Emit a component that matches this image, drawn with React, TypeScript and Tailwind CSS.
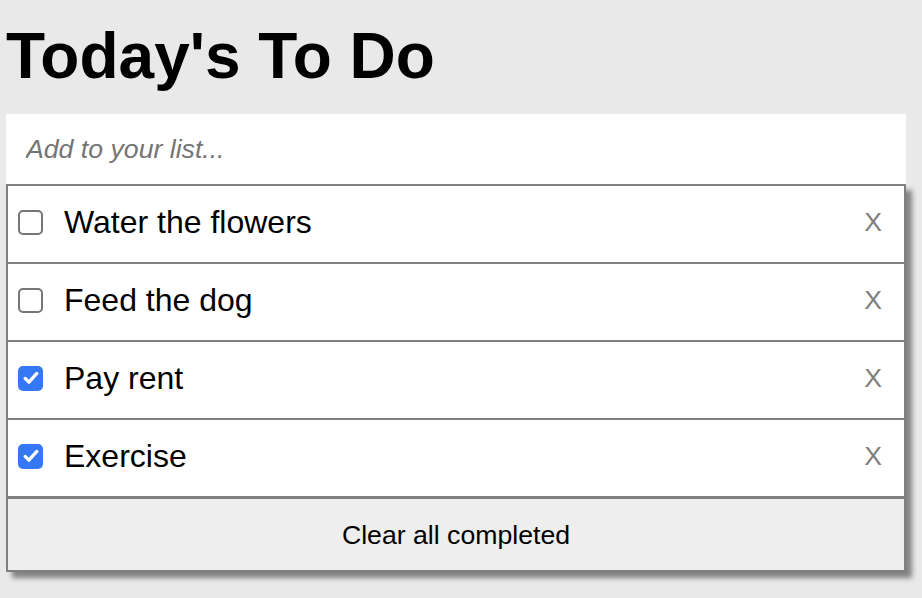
import { useState } from "react";

type Todo = { id: number; text: string; done: boolean };

const initial: Todo[] = [
  { id: 1, text: "Water the flowers", done: false },
  { id: 2, text: "Feed the dog", done: false },
  { id: 3, text: "Pay rent", done: true },
  { id: 4, text: "Exercise", done: true },
];

function Check({ checked, onClick }: { checked: boolean; onClick: () => void }) {
  return (
    <button
      onClick={onClick}
      className={
        checked
          ? "w-[25px] h-[25px] shrink-0 rounded-[5px] bg-[#3478f6] flex items-center justify-center"
          : "w-[25px] h-[25px] shrink-0 rounded-[5px] bg-white border-2 border-[#767676]"
      }
    >
      {checked && (
        <svg viewBox="0 0 24 24" className="w-[20px] h-[20px]">
          <path
            d="M5 12.5l4.5 4.5L19 6.5"
            fill="none"
            stroke="white"
            strokeWidth="4"
            strokeLinecap="round"
            strokeLinejoin="round"
          />
        </svg>
      )}
    </button>
  );
}

export default function App() {
  const [todos, setTodos] = useState<Todo[]>(initial);

  return (
    <div className="min-h-screen bg-[#e9e9e9] px-[6px] font-['Liberation_Sans',Arial,sans-serif] text-black">
      {/* Title */}
      <h1 className="pt-[19px] mb-[21px] text-[64px] leading-[74px] font-bold">Today's To Do</h1>

      {/* Input */}
      <input
        placeholder="Add to your list..."
        className="w-[900px] h-[70px] bg-white pl-[20px] text-[26.67px] italic outline-none placeholder:text-[#757575]"
      />

      {/* List */}
      <div className="w-[900px] border-2 border-[#808080] shadow-[6px_6px_5px_#828282] bg-white">
        <ul>
          {todos.map((t) => (
            <li
              key={t.id}
              className="h-[78px] border-b-2 border-[#808080] flex items-center pl-[10px] pr-[22px] pb-[4px]"
            >
              <Check
                checked={t.done}
                onClick={() =>
                  setTodos(todos.map((x) => (x.id === t.id ? { ...x, done: !x.done } : x)))
                }
              />
              <span className="ml-[21px] text-[32px] leading-[37px] flex-1">{t.text}</span>
              <button
                onClick={() => setTodos(todos.filter((x) => x.id !== t.id))}
                className="text-[26.67px] text-[#808080]"
              >
                X
              </button>
            </li>
          ))}
        </ul>
        <button
          onClick={() => setTodos(todos.filter((x) => !x.done))}
          className="w-full h-[72px] bg-[#eeeeee] text-[26.67px] border-t border-[#808080]"
        >
          Clear all completed
        </button>
      </div>
    </div>
  );
}
